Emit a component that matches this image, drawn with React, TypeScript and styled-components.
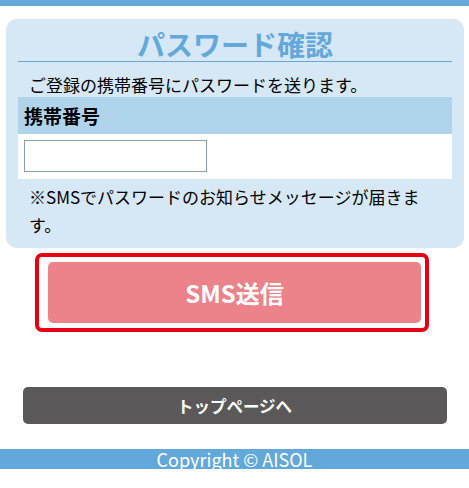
import React, { useState } from 'react'
import styled, { createGlobalStyle } from 'styled-components'

const colors = {
  blue: '#63a8da',
  card: '#d6e8f6',
  header: '#b0d4ec',
  red: '#e60012',
  pink: '#ec838a',
  gray: '#5a5859',
}

const GlobalStyle = createGlobalStyle`
  html, body {
    margin: 0;
    padding: 0;
    background: #fff;
  }
  body {
    font-family: "Noto Sans CJK JP", "Noto Sans", sans-serif;
    color: #000;
  }
  * {
    box-sizing: border-box;
  }
`

const App = () => {
  const [phone, setPhone] = useState('')

  return (
    <Page>
      <GlobalStyle />
      <TopBar />
      <Card>
        <Title>パスワード確認</Title>
        <Intro>ご登録の携帯番号にパスワードを送ります。</Intro>
        <FieldHeader>携帯番号</FieldHeader>
        <FieldBody>
          <PhoneInput
            type='tel'
            value={phone}
            onChange={e => setPhone(e.target.value)}
          />
        </FieldBody>
        <Note>※SMSでパスワードのお知らせメッセージが届きます。</Note>
      </Card>
      <SendFrame>
        <SendButton type='button'>SMS送信</SendButton>
      </SendFrame>
      <TopLink type='button'>トップページへ</TopLink>
      <Footer>Copyright © AISOL</Footer>
    </Page>
  )
}

const Page = styled.div`
  width: 469px;
  min-height: 488px;
  display: flex;
  flex-direction: column;
  align-items: center;
`

const TopBar = styled.div`
  align-self: stretch;
  height: 6px;
  background: ${colors.blue};
`

const Card = styled.div`
  width: 458px;
  margin-top: 13px;
  margin-left: 1px;
  padding: 8px 12px 9px;
  background: ${colors.card};
  border-radius: 11px;
  display: flex;
  flex-direction: column;
`

const Title = styled.h1`
  margin: 0;
  font-size: 28px;
  line-height: 34px;
  font-weight: 700;
  text-align: center;
  color: ${colors.blue};
  border-bottom: 1px solid ${colors.blue};
`

const Intro = styled.p`
  margin: 0;
  padding: 10px 0 0 11px;
  font-size: 17px;
  line-height: 25px;
`

const FieldHeader = styled.div`
  height: 37px;
  padding-left: 6px;
  display: flex;
  align-items: center;
  background: ${colors.header};
  font-size: 19px;
  font-weight: 700;
`

const FieldBody = styled.div`
  height: 45px;
  padding: 6px 6px 0;
  background: #fff;
`

const PhoneInput = styled.input`
  display: block;
  width: 183px;
  height: 32px;
  margin: 0;
  padding: 2px 4px;
  border: 1px solid #86a0b8;
  background: #fff;
  font: inherit;
  font-size: 16px;
  outline: none;
`

const Note = styled.p`
  margin: 0;
  padding: 4px 14px 0 11px;
  font-size: 17px;
  line-height: 28px;
`

const SendFrame = styled.div`
  width: 394px;
  margin-top: 5px;
  margin-right: 5px;
  padding: 5px 4px 5px 9px;
  border: 4px solid ${colors.red};
  border-radius: 7px;
  display: flex;
`

const SendButton = styled.button`
  flex: 1;
  height: 61px;
  border: none;
  border-radius: 5px;
  background: ${colors.pink};
  color: #fff;
  font-family: inherit;
  font-size: 24px;
  font-weight: 700;
  cursor: pointer;
`

const TopLink = styled.button`
  width: 424px;
  height: 37px;
  margin-top: 55px;
  border: none;
  border-radius: 5px;
  background: ${colors.gray};
  color: #fff;
  font-family: inherit;
  font-size: 16.5px;
  font-weight: 700;
  cursor: pointer;
`

const Footer = styled.footer`
  align-self: stretch;
  height: 20px;
  margin-top: 25px;
  display: flex;
  align-items: center;
  justify-content: center;
  background: ${colors.blue};
  color: #fff;
  font-size: 18px;
  line-height: 20px;
`

export default App
